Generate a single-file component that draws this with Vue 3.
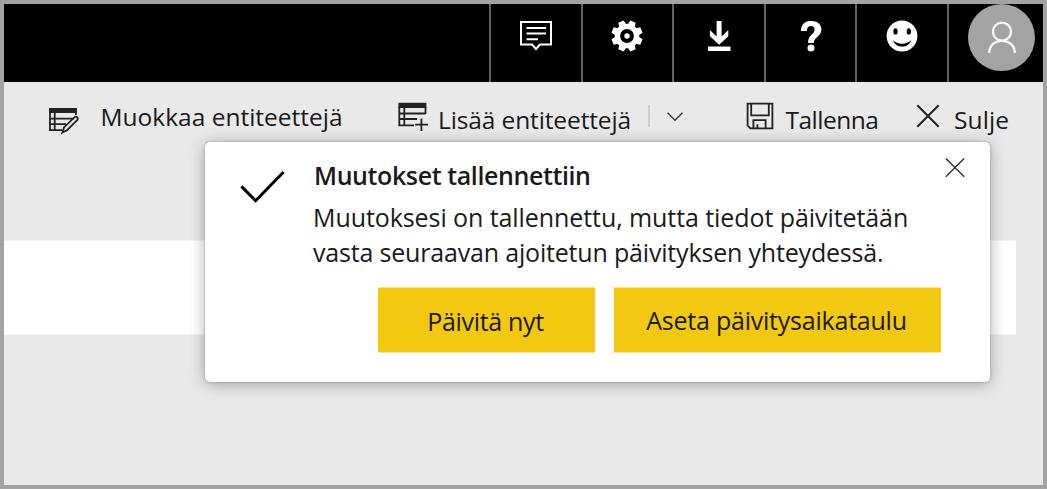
<script setup>
const teeth = [22.5, 67.5, 112.5, 157.5, 202.5, 247.5, 292.5, 337.5]
</script>

<template>
  <div class="frame">
    <header class="topbar">
      <button class="cell" aria-label="Kommentit">
        <svg width="34" height="34" viewBox="0 0 34 34" fill="none" stroke="#fff" stroke-width="2">
          <path d="M2 3H32V25.5H21L17 30L13 25.5H2Z" />
          <path d="M7.5 9H27M7.5 14.5H27M7.5 20.3H19" />
        </svg>
      </button>
      <button class="cell" aria-label="Asetukset">
        <svg width="34" height="34" viewBox="-17 -17 34 34">
          <circle r="9.6" fill="none" stroke="#fff" stroke-width="5.4" />
          <path v-for="a in teeth" :key="a" :transform="`rotate(${a})`" d="M-3.7 -11L-2.9 -15.6H2.9L3.7 -11Z" fill="#fff" />
          <circle r="2.7" fill="#fff" />
        </svg>
      </button>
      <button class="cell" aria-label="Lataa">
        <svg width="34" height="34" viewBox="0 0 34 34" fill="#fff">
          <path d="M14.6 2H19.6V17.5L26.3 11V17.3L17.1 25.8L7.9 17.3V11L14.6 17.5Z" />
          <path d="M6 27.5H28.5V32H6Z" />
        </svg>
      </button>
      <button class="cell" aria-label="Ohje">
        <svg width="34" height="34" viewBox="0 0 34 34">
          <path d="M6.8 12C7.4 3.2 13 2 17.2 2C23.5 2 27.4 5.3 27.4 10.6C27.4 17.6 19.8 18.4 19.8 24H14C14 15.6 20.6 15.6 20.6 10.8C20.6 8.2 19.1 7 17 7C14.6 7 13 8.6 12.8 12Z" fill="#fff" />
          <circle cx="17" cy="29" r="3.5" fill="#fff" />
        </svg>
      </button>
      <button class="cell" aria-label="Palaute">
        <svg width="34" height="34" viewBox="-17 -17 34 34">
          <circle r="15.4" fill="#fff" />
          <ellipse cx="-6.5" cy="-4.6" rx="2.1" ry="3.2" />
          <ellipse cx="6.8" cy="-4.6" rx="2.1" ry="3.2" />
          <path d="M-9 4C-5 9 5 9 9.2 4C7 12.8 -6.5 12.8 -9 4Z" />
        </svg>
      </button>
      <div class="cell last">
        <div class="avatar">
          <svg width="34" height="34" viewBox="0 0 34 34" fill="none" stroke="#fff" stroke-width="2.2">
            <circle cx="17" cy="11.7" r="9" />
            <path d="M4.2 33C4.2 25.5 9.8 20.8 17 20.8S29.8 25.5 29.8 33" />
          </svg>
        </div>
      </div>
    </header>

    <nav class="toolbar">
      <button class="tool edit">
        <svg width="32" height="28" viewBox="0 0 32 28" fill="none" stroke="#222" stroke-width="1.8">
          <path d="M1 1H29V6H1Z" fill="#222" stroke="none" />
          <path d="M2 5V23.2H14M6.7 6V23M2 11.7H26M2 17.2H18M28 5V8" />
          <path d="M14.4 25.6L16 20.4L26.6 10.2C28.6 8.9 30.8 11 29.4 13L18.8 23.4Z" />
        </svg>
        <span>Muokkaa entiteettejä</span>
      </button>
      <button class="tool add">
        <svg width="32" height="30" viewBox="0 0 32 30" fill="none" stroke="#222" stroke-width="1.8">
          <path d="M0.4 0.8H28.4V6H0.4Z" fill="#222" stroke="none" />
          <path d="M1.3 5V23.4H16M6.3 6V23M1.3 11.5H27.5M27.5 5V12M1.3 17H19" />
          <path d="M17.2 22.7H30M23.4 16.5V29" />
        </svg>
        <span>Lisää entiteettejä</span>
      </button>
      <i class="divider"></i>
      <button class="chevron" aria-label="Lisää vaihtoehtoja">
        <svg width="18" height="12" viewBox="0 0 18 12" fill="none" stroke="#333" stroke-width="1.3">
          <path d="M1.6 1.8L9 9.3L16.4 1.8" />
        </svg>
      </button>
      <button class="tool save">
        <svg width="28" height="28" viewBox="0 0 28 28" fill="none" stroke="#222" stroke-width="1.8">
          <path d="M1.6 1.6H26.4V26.4H4.4L1.6 23.6Z" />
          <path d="M5.2 2V13.3H22.8V2M7.4 26V18.2H19.6V26M11.4 22.3V26" />
        </svg>
        <span>Tallenna</span>
      </button>
      <button class="tool close">
        <svg width="24" height="24" viewBox="0 0 24 24" fill="none" stroke="#222" stroke-width="2">
          <path d="M1.3 1.3L22.7 22.7M22.7 1.3L1.3 22.7" />
        </svg>
        <span>Sulje</span>
      </button>
    </nav>

    <div class="strip"></div>

    <section class="dialog" role="dialog">
      <svg class="check" width="46" height="34" viewBox="0 0 46 34" fill="none" stroke="#000" stroke-width="3">
        <path d="M1.4 16.4L15.6 30.7L43.6 2" />
      </svg>
      <div class="body">
        <h1>Muutokset tallennettiin</h1>
        <p>
          <span class="l1">Muutoksesi on tallennettu, mutta tiedot päivitetään</span><br>
          <span class="l2">vasta seuraavan ajoitetun päivityksen yhteydessä.</span>
        </p>
        <div class="actions">
          <button class="btn now">Päivitä nyt</button>
          <button class="btn plan">Aseta päivitysaikataulu</button>
        </div>
      </div>
      <button class="dismiss" aria-label="Sulje ilmoitus">
        <svg width="20" height="20" viewBox="0 0 20 20" fill="none" stroke="#333" stroke-width="1.4">
          <path d="M0.8 0.4L19.2 18.8M19.2 0.4L0.8 18.8" />
        </svg>
      </button>
    </section>
  </div>
</template>

<style>
body { margin: 0; background: #e9e9e9; }
</style>

<style scoped>
* { box-sizing: border-box; }
svg { display: block; flex: none; }
button { padding: 0; border: 0; background: none; color: inherit; font: inherit; }
.frame {
  position: relative;
  width: 1047px;
  height: 489px;
  overflow: hidden;
  border: 4px solid #a3a3a3;
  background: #e9e9e9;
  color: #1a1a1a;
  font: 25px/35px "Open Sans", "Noto Sans", sans-serif;
}
.topbar {
  display: grid;
  grid-template-columns: repeat(5, 91.6px) 96px;
  justify-content: end;
  height: 78px;
  background: #000;
}
.cell {
  display: flex;
  justify-content: center;
  align-items: flex-start;
  padding-top: 15px;
  border-left: 2px solid #636363;
}
.cell.last { padding: 0 8px 0 19px; justify-content: flex-start; }
.avatar {
  display: flex;
  flex: none;
  justify-content: center;
  width: 67px;
  height: 67px;
  margin-top: -.5px;
  padding-top: 16.5px;
  border-radius: 50%;
  background: #a3a3a3;
}
.toolbar {
  display: flex;
  align-items: flex-start;
  height: 158px;
  padding-left: 44px;
  font-size: 24.5px;
}
.tool { display: flex; align-items: flex-start; white-space: nowrap; text-align: left; }
.edit { width: 350px; padding-top: 17px; gap: 20.5px; }
.edit svg { margin-top: 8px; }
.add { width: 250px; padding-top: 20px; gap: 8px; letter-spacing: -.12px; }
.divider { width: 2px; height: 22px; margin-top: 23px; background: #cdcdcd; }
.chevron { margin: 29px 0 0 15.5px; }
.save { width: 170px; margin-left: 62.5px; padding-top: 20px; gap: 11.5px; letter-spacing: -.5px; }
.close { padding-top: 20px; gap: 14px; letter-spacing: .1px; }
.close svg { margin-top: 2px; }
.strip {
  width: 1012px;
  height: 95px;
  border: solid #f4f4f4;
  border-width: 1px 0;
  background: #fff;
}
.dialog {
  position: absolute;
  left: 201px;
  top: 138px;
  display: flex;
  align-items: flex-start;
  width: 785px;
  height: 240px;
  padding: 16px 25px 0 35px;
  border-radius: 5px;
  background: #fff;
  box-shadow: 0 0 2px rgba(0, 0, 0, .3), 0 2px 16px rgba(0, 0, 0, .32);
}
.check { margin-top: 12px; }
.body { width: 645px; padding-left: 27px; }
h1 {
  margin: 0 0 7px 1px;
  font-size: inherit;
  font-weight: 600;
  letter-spacing: -.4px;
}
p { margin: 0; white-space: nowrap; }
.l1 { letter-spacing: -.075px; }
.l2 { letter-spacing: -.18px; }
.actions {
  display: flex;
  gap: 19px;
  margin: 17px 0 0 65px;
}
.btn {
  height: 66px;
  border: solid #f9e48c;
  border-width: 1px 0;
  background: #f2c811;
  background-clip: padding-box;
}
.now { flex: 0 0 217px; padding: 3px 2px 0 0; letter-spacing: -.32px; }
.plan { flex: 0 0 327px; padding: 1px 2px 0 0; letter-spacing: -.22px; }
.dismiss { margin-left: 14px; }
</style>
